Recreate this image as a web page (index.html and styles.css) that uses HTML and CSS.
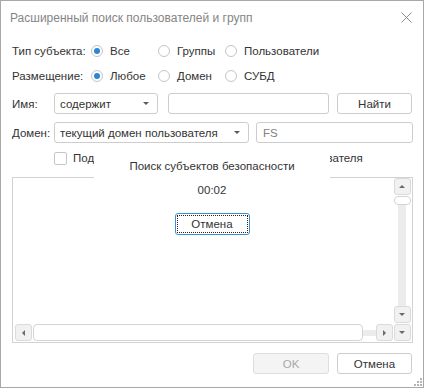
FILE: index.html
```html
<!DOCTYPE html>
<html lang="ru">
<head>
    <meta charset="UTF-8">
    <title>Расширенный поиск пользователей и групп</title>
    <link rel="stylesheet" href="styles.css">
</head>
<body>
    <div class="window">
        <div class="titlebar">
            <span class="title">Расширенный поиск пользователей и групп</span>
            <svg class="close" width="11" height="11" viewBox="0 0 11 11">
                <path d="M0.5 0.5 L10.5 10.5 M10.5 0.5 L0.5 10.5" stroke="#8c8c8c" stroke-width="1" fill="none"/>
            </svg>
        </div>

        <div class="form">
            <div class="row row-radio first">
                <span class="label label-wide">Тип субъекта:</span>
                <span class="opt"><span class="radio checked"></span>Все</span>
                <span class="opt"><span class="radio"></span>Группы</span>
                <span class="opt"><span class="radio"></span>Пользователи</span>
            </div>
            <div class="row row-radio">
                <span class="label label-wide">Размещение:</span>
                <span class="opt"><span class="radio checked"></span>Любое</span>
                <span class="opt"><span class="radio"></span>Домен</span>
                <span class="opt"><span class="radio"></span>СУБД</span>
            </div>
            <div class="row row-field name-row">
                <span class="label">Имя:</span>
                <div class="select select-name">содержит<span class="arrow"></span></div>
                <div class="input input-name"></div>
                <div class="btn btn-find">Найти</div>
            </div>
            <div class="row row-field domain-row">
                <span class="label">Домен:</span>
                <div class="select select-domain">текущий домен пользователя<span class="arrow"></span></div>
                <div class="input input-domain">FS</div>
            </div>
            <div class="row row-check">
                <span class="checkbox"></span>
                <span class="check-text">Подставлять домен для учётной записи пользователя</span>
            </div>

            <div class="list">
                <div class="list-area"></div>
                <div class="vscroll">
                    <div class="sbtn"><span class="tri tri-up"></span></div>
                    <div class="vthumb"></div>
                    <div class="vtrack"></div>
                    <div class="sbtn"><span class="tri tri-down"></span></div>
                </div>
                <div class="hscroll">
                    <div class="sbtn"><span class="tri tri-left"></span></div>
                    <div class="hthumb"></div>
                    <div class="htrack"></div>
                    <div class="sbtn"><span class="tri tri-right"></span></div>
                </div>
                <div class="corner">
                    <div class="sbtn"><span class="tri tri-down"></span></div>
                </div>
            </div>
        </div>

        <div class="footer">
            <div class="btn btn-ok disabled">OK</div>
            <div class="btn btn-cancel">Отмена</div>
        </div>

        <svg class="grip" width="8" height="8" viewBox="0 0 8 8">
            <rect x="6" y="0" width="2" height="2" fill="#b4b4b4"/>
            <rect x="3" y="3" width="2" height="2" fill="#b4b4b4"/>
            <rect x="6" y="3" width="2" height="2" fill="#b4b4b4"/>
            <rect x="0" y="6" width="2" height="2" fill="#b4b4b4"/>
            <rect x="3" y="6" width="2" height="2" fill="#b4b4b4"/>
            <rect x="6" y="6" width="2" height="2" fill="#b4b4b4"/>
        </svg>

        <!-- окно прогресса поверх списка -->
        <div class="progress">
            <div class="progress-title">Поиск субъектов безопасности</div>
            <div class="progress-time">00:02</div>
            <div class="btn btn-stop"><span class="focus">Отмена</span></div>
        </div>
    </div>
</body>
</html>
```

FILE: styles.css
```css
body {
    margin: 0;
    background: #fff;
    font-family: 'Liberation Sans', Arial, sans-serif;
    font-size: 11.5px;
    color: #333;
}

.window {
    position: relative;
    width: 424px;
    height: 388px;
    box-sizing: border-box;
    border: 1px solid #a8a8a8;
    background: #fff;
}

.titlebar {
    height: 37px;
    display: flex;
    align-items: center;
    justify-content: space-between;
    padding: 0 11px 4px 9px;
    box-sizing: border-box;
}

.title {
    font-size: 12px;
    color: #858585;
}

.form {
    padding: 0 10px 0 11px;
}

.row {
    display: flex;
    align-items: center;
}

.label {
    width: 42px;
    flex: none;
}

.label-wide {
    width: 79px;
}

.row-radio {
    height: 20px;
    margin-top: 5px;
}

.row-radio.first {
    margin-top: 3px;
}

.opt {
    display: flex;
    align-items: center;
    width: 67px;
    flex: none;
}

.radio {
    width: 10px;
    height: 10px;
    border: 1px solid #c4c4c4;
    border-radius: 50%;
    margin-right: 7px;
    position: relative;
    flex: none;
}

.radio.checked::after {
    content: "";
    position: absolute;
    left: 2px;
    top: 2px;
    width: 6px;
    height: 6px;
    border-radius: 50%;
    background: #2b87d6;
}

.row-field {
    height: 21px;
}

.name-row {
    margin-top: 7px;
}

.domain-row {
    margin-top: 8px;
}

.select, .input, .btn {
    height: 21px;
    box-sizing: border-box;
    border: 1px solid #cdcdcd;
    border-radius: 3px;
    display: flex;
    align-items: center;
    flex: none;
}

.select {
    padding-left: 5px;
    position: relative;
}

.arrow {
    position: absolute;
    right: 8px;
    top: 8px;
    width: 0;
    height: 0;
    border-left: 3px solid transparent;
    border-right: 3px solid transparent;
    border-top: 3px solid #5a5a5a;
}

.select-name { width: 104px; }
.input-name { width: 161px; margin-left: 10px; }
.btn-find { width: 75px; margin-left: 8px; }
.select-domain { width: 195px; }
.input-domain { width: 157px; margin-left: 7px; padding-left: 6px; color: #808080; }

.btn {
    justify-content: center;
    background: #fff;
}

.row-check {
    height: 20px;
    margin-top: 5px;
    padding-left: 42px;
}

.checkbox {
    width: 11px;
    height: 11px;
    border: 1px solid #c6c6c6;
    border-radius: 2px;
    margin-right: 6px;
    flex: none;
}

.list {
    margin-top: 9px;
    height: 166px;
    width: 401px;
    box-sizing: border-box;
    border: 1px solid #d2d2d2;
    display: grid;
    grid-template-columns: 1fr 18px;
    grid-template-rows: 1fr 17px;
    padding: 0 1px 1px 2px;
}

.vscroll {
    display: flex;
    flex-direction: column;
    align-items: center;
    padding-bottom: 1px;
}

.sbtn {
    width: 17px;
    height: 17px;
    box-sizing: border-box;
    border: 1px solid #dadada;
    border-radius: 3px;
    background: #f1f1f1;
    display: flex;
    align-items: center;
    justify-content: center;
    flex: none;
}

.tri {
    width: 0;
    height: 0;
}

.tri-up {
    border-left: 3px solid transparent;
    border-right: 3px solid transparent;
    border-bottom: 3px solid #6a6a6a;
}

.tri-down {
    border-left: 3px solid transparent;
    border-right: 3px solid transparent;
    border-top: 3px solid #6a6a6a;
}

.tri-left {
    border-top: 3px solid transparent;
    border-bottom: 3px solid transparent;
    border-right: 3px solid #6a6a6a;
}

.tri-right {
    border-top: 3px solid transparent;
    border-bottom: 3px solid transparent;
    border-left: 3px solid #6a6a6a;
}

.vthumb {
    width: 17px;
    height: 9px;
    box-sizing: border-box;
    border: 1px solid #d4d4d4;
    border-radius: 4px;
    background: #fff;
    flex: none;
    margin-top: 1px;
}

.vtrack {
    flex: 1;
    width: 8px;
    background: #ececec;
}

.hscroll {
    display: flex;
    align-items: center;
}

.hthumb {
    flex: 1;
    height: 17px;
    box-sizing: border-box;
    border: 1px solid #d4d4d4;
    border-radius: 4px;
    background: #fff;
    margin-left: 1px;
}

.htrack {
    width: 13px;
    height: 6px;
    background: #ececec;
}

.corner {
    display: flex;
    justify-content: center;
}

.footer {
    display: flex;
    justify-content: flex-end;
    padding-right: 11px;
    margin-top: 10px;
}

.btn-ok { width: 76px; }
.btn-cancel { width: 75px; margin-left: 8px; }

.btn.disabled {
    background: #f4f4f4;
    border-color: #dedede;
    color: #a8a8a8;
}

.grip {
    position: absolute;
    right: 1px;
    bottom: 1px;
}

.progress {
    position: absolute;
    left: 93px;
    top: 147px;
    width: 236px;
    height: 98px;
    background: #fff;
    display: flex;
    flex-direction: column;
    align-items: center;
}

.progress-title {
    margin-top: 10px;
    line-height: 17px;
}

.progress-time {
    margin-top: 7px;
    line-height: 17px;
}

.btn-stop {
    margin-top: 14px;
    width: 75px;
    height: 22px;
    border: 1px solid #3c8fd8;
    padding: 1px;
}

.focus {
    flex: 1;
    align-self: stretch;
    display: flex;
    align-items: center;
    justify-content: center;
    border: 1px dotted #222;
}
```
